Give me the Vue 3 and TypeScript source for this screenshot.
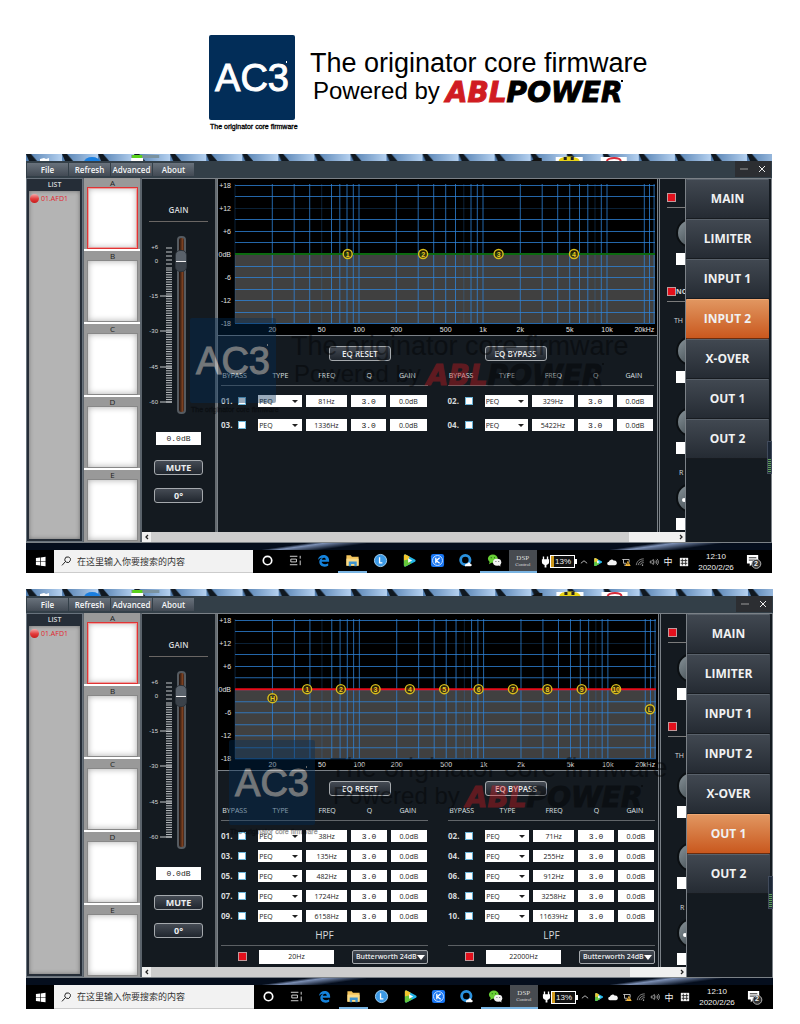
<script setup lang="ts">
import { ref } from 'vue'

interface Band { id: string; freq: number }
interface Filter { name: string; freq: string }
interface Screen {
  key: string
  active: string
  bands: Band[]
  filters: Filter[]
  curve: string
  side: string
  gain: number
}

const makeBands = (freqs: number[]): Band[] =>
  freqs.map((freq, i) => ({ id: String(i + 1).padStart(2, '0'), freq }))

const screens = ref<Screen[]>([
  {
    key: 'input',
    active: 'INPUT 2',
    bands: makeBands([81, 329, 1336, 5422]),
    filters: [],
    curve: '#0c6a10',
    side: 'NO',
    gain: 0,
  },
  {
    key: 'output',
    active: 'OUT 1',
    bands: makeBands([38, 71, 135, 255, 482, 912, 1724, 3258, 6158, 11639]),
    filters: [
      { name: 'HPF', freq: '20Hz' },
      { name: 'LPF', freq: '22000Hz' },
    ],
    curve: '#e80c18',
    side: '',
    gain: 0,
  },
])

const menus = ['File', 'Refresh', 'Advanced', 'About']
const presets = ['A', 'B', 'C', 'D', 'E']
const pages = ['MAIN', 'LIMITER', 'INPUT 1', 'INPUT 2', 'X-OVER', 'OUT 1', 'OUT 2']
const apps = ['cortana', 'taskview', 'edge', 'folder', 'clockapp', 'player', 'kapp', 'browser', 'wechat']
const tray = ['chevron', 'player', 'cloud', 'network', 'wifi', 'volume']
const openApps = ['folder', 'wechat']

const freqX = (f: number): number => Math.round((141 + 124 * Math.log10(f / 100)) * 10) / 10
const dbY = (db: number): number => Math.round(75 - db * 3.86)

const gridFreqs: number[] = []
for (const decade of [10, 100, 1000, 10000]) {
  for (let n = 1; n < 10; n++) {
    const f = decade * n
    if (f <= 20000) gridFreqs.push(f)
  }
}
gridFreqs.push(22000, 24000)
const faint = [10, 50, 700, 8000]
const gridDbs = [18, 15, 12, 9, 6, 3, 0, -3, -6, -9, -12, -15, -18]
const dbLabels = [
  { db: 18, text: '+18' }, { db: 12, text: '+12' }, { db: 6, text: '+6' }, { db: 0, text: '0dB' },
  { db: -6, text: '-6' }, { db: -12, text: '-12' }, { db: -18, text: '-18' },
]
const freqLabels = [
  { f: 20, text: '20' }, { f: 50, text: '50' }, { f: 100, text: '100' }, { f: 200, text: '200' },
  { f: 500, text: '500' }, { f: 1000, text: '1k' }, { f: 2000, text: '2k' }, { f: 5000, text: '5k' },
  { f: 10000, text: '10k' }, { f: 20000, text: '20kHz' },
]

const ticks: number[] = []
for (let y = 12; y < 34; y += 4) ticks.push(y)
for (let i = 0; i < 56; i++) ticks.push(Math.round((34 + i * 2.4) * 10) / 10)
const scaleMarks = [
  { y: 11, text: '+6' }, { y: 25, text: '0' }, { y: 60, text: '-15' },
  { y: 95, text: '-30' }, { y: 131, text: '-45' }, { y: 166, text: '-60' },
]

const half = (bands: Band[], rest: number): Band[] => bands.filter((_, i) => i % 2 === rest)
</script>

<template>
  <svg class="sprite" aria-hidden="true">
    <defs>
      <linearGradient id="knobFill" x1="0" y1="0" x2="1" y2="1">
        <stop offset="0" stop-color="#8c979d" /><stop offset="1" stop-color="#2c363c" />
      </linearGradient>
      <linearGradient id="sky" x1="0" y1="0" x2="1" y2="0">
        <stop offset="0" stop-color="#4f7cae" /><stop offset="1" stop-color="#b5d1f0" />
      </linearGradient>
      <pattern id="slats" width="36" height="7" patternUnits="userSpaceOnUse">
        <rect width="36" height="7" fill="url(#sky)" />
        <path d="M0 0h5l6 7H3z" fill="#101820" />
      </pattern>
      <symbol id="i-windows" viewBox="0 0 12 12"><path d="M1 2.3 5.5 1.6v4H1zM6.2 1.5 11.5.7v4.9H6.2zM1 6.3h4.5v4L1 9.7zM6.2 6.3h5.3v5l-5.3-.8z" fill="#fff" /></symbol>
      <symbol id="i-search" viewBox="0 0 12 12"><path d="M5.3 6.7 2 10.4M4.8 4.3a2.8 2.8 0 1 1 1.5 2.9 2.8 2.8 0 0 1-1.5-2.9z" fill="none" stroke="#222" /></symbol>
      <symbol id="i-cortana" viewBox="0 0 16 16"><circle cx="8" cy="8" r="4.500" fill="none" stroke="#fff" stroke-width="1.800" /></symbol>
      <symbol id="i-taskview" viewBox="0 0 16 16"><path d="M2 3.500h8M2 12.500h8M3 6.500h6v3H3zM13 3v3M13 8v5" fill="none" stroke="#ddd" /></symbol>
      <symbol id="i-edge" viewBox="0 0 16 16"><path d="M2 7.4C2.7 3.8 5.200 2 8.200 2 12 2 14 4.700 14 8v1.300H6c.2 3 4.700 3.200 7 1.700v2.600c-4.500 2.200-9.500.6-9.500-4.200C3.500 7.200 5 5.800 6.600 5 4.600 5.300 3 6.200 2 7.400zM6.200 7.200h4.300C10.400 4.300 6.600 4.400 6.200 7.200z" fill="#1583dc" /></symbol>
      <symbol id="i-folder" viewBox="0 0 16 16"><path d="M1.500 2.500h4.600l1.300 1.600h7.100v9.400h-13z" fill="#f3c35a" /><path d="M1.500 6h13v7.500h-13z" fill="#fbdc88" /><path d="M4 9h8.500v5H10v-2.300H6.500V14H4z" fill="#3f94d0" /></symbol>
      <symbol id="i-clockapp" viewBox="0 0 16 16"><circle cx="8" cy="8" r="6.500" fill="#3b99e6" stroke="#a8d5f7" /><path d="M7 4.500v6h3" fill="none" stroke="#fff" stroke-width="1.400" /></symbol>
      <symbol id="i-player" viewBox="0 0 16 16"><path d="M2 3c0-1.400 1.200-1.800 2.300-1.200l9.500 5c1 .6 1 1.800 0 2.400l-9.500 5C3.200 14.800 2 14.400 2 13z" fill="#25b7e8" /><path d="M2 8V3c0-1.400 1.200-1.800 2.300-1.200L8 3.700 6 12z" fill="#f4c62c" /><path d="M2 8v5c0 1.400 1.200 1.800 2.300 1.200L10 11 6 7z" fill="#66c83a" /><path d="m6.500 5.500 4.300 2.500-4.300 2.500z" fill="#fff" /></symbol>
      <symbol id="i-kapp" viewBox="0 0 16 16"><rect x="1" y="1" width="14" height="14" rx="2.500" fill="#1976f2" /><circle cx="8" cy="8" r="5.300" fill="none" stroke="#cfe4ff" /><path d="M6.200 5v6M10.300 5 6.700 8.200l3.600 2.800" fill="none" stroke="#fff" stroke-width="1.400" /></symbol>
      <symbol id="i-browser" viewBox="0 0 16 16"><circle cx="7.800" cy="7.500" r="5" fill="none" stroke="#2a91dd" stroke-width="3" /><path d="M7.500 14c-.6-2 1-3 2.300-2.500.7-2 3.400-1.700 3.500.2 1.700 0 1.900 2.300.2 2.300z" fill="#fff" /></symbol>
      <symbol id="i-wechat" viewBox="0 0 16 16"><ellipse cx="6.200" cy="6" rx="5.200" ry="4.500" fill="#67cf35" /><path d="m3 9-1 3 3.200-1.800z" fill="#67cf35" /><ellipse cx="10.800" cy="9.800" rx="4.400" ry="3.700" fill="#f2f2f2" /><path d="m12 12.500 2.300 2-.3-3z" fill="#f2f2f2" /><path d="M4 4.500h1v1H4zM7.500 4.500h1v1h-1z" fill="#174d11" /><path d="M9 8.500h1v1H9zM12 8.500h1v1h-1z" fill="#666" /></symbol>
      <symbol id="i-chevron" viewBox="0 0 16 16"><path d="m3 10 5-4 5 4" fill="none" stroke="#ddd" stroke-width="1.300" /></symbol>
      <symbol id="i-cloud" viewBox="0 0 16 16"><path d="M3 13a2.700 2.700 0 0 1 0-5.400A4.500 4.500 0 0 1 11 6a3.500 3.500 0 0 1 2 7z" fill="#f4f4f4" /></symbol>
      <symbol id="i-network" viewBox="0 0 16 16"><path d="M2 4h11v5M4 4v6h4M5 13h4" fill="none" stroke="#ddd" stroke-width="1.300" /><path d="m11 6 4.500 8.500h-9z" fill="#f7b93a" /><path d="M11 9v3" stroke="#222" stroke-width="1.300" /></symbol>
      <symbol id="i-wifi" viewBox="0 0 16 16"><path d="M2 13C3 7 7 3 14 3M5 13c.6-4 4-7 9-7M8 13c.4-2 2.500-4 6-4" fill="none" stroke="#ccc" /><path d="M11 12h2v2h-2z" fill="#ccc" /></symbol>
      <symbol id="i-volume" viewBox="0 0 16 16"><path d="M2 6.500h2L7 4v8L4 9.500H2zM9 6c1 1.200 1 2.800 0 4M11 4.500c2 2 2 5 0 7M13 3c2.700 3 2.700 7 0 10" fill="none" stroke="#ddd" /></symbol>
      <symbol id="i-ime" viewBox="0 0 12 12"><path d="M1 1h10v10H1z" fill="#f2f2f2" /><path d="M4 2v8M8 2v8M2 4.300h8M2 7.600h8" stroke="#222" /></symbol>
      <symbol id="i-plug" viewBox="0 0 10 14"><path d="M2 1h1.500v3h3V1H8v3h1v3c0 2-1.500 3-3 3.200V13H4v-2.800C2.500 10 1 9 1 7V4h1z" fill="#fff" /></symbol>
      <symbol id="i-notice" viewBox="0 0 18 16"><path d="M2 1h12v9H8l-3 3v-3H2z" fill="#fff" /><path d="M4 4h8M4 6.500h6" stroke="#222" /><circle cx="12" cy="10.500" r="4.800" fill="#333" stroke="#bbb" /></symbol>
    </defs>
  </svg>

  <main class="page">
    <header class="top">
      <div class="brand">
        <div class="mark">AC3<i class="dot"></i></div>
        <div class="words">
          <div class="line1">The originator core firmware</div>
          <div class="line2">Powered by <b class="logo"><span>ABL</span>POWER</b><i class="dot ink"></i></div>
        </div>
        <small>The originator core firmware</small>
      </div>
    </header>

    <section v-for="s in screens" :key="s.key" class="desktop" :class="s.key">
      <svg class="strip" viewBox="0 0 745 7" preserveAspectRatio="xMinYMin slice" aria-hidden="true">
        <rect width="745" height="7" fill="#27486b" />
        <path d="M0 0h745v7H0z" fill="url(#slats)" />
        <path d="M14 7V5l4-1 2 1 3-1v3z" fill="#fff" /><ellipse cx="66" cy="8" rx="8" ry="5" fill="#1a7fe0" />
        <path d="M105 2h12v5h-12z" fill="#fff" /><path d="M105 1h28v3h-28z" fill="#7a929f" /><path d="M106 1h10v3h-10z" fill="#5ad21c" />
        <path d="M504 7l6-3h5v3z" fill="#111" /><path d="M529 3h27v4h-27z" fill="#fff" /><path d="M532 7c0-6 20-6 21 0z" fill="#e8d316" /><path d="M537 3h3v3h-3zM544 3h3v3h-3z" fill="#222" />
        <path d="M574 3h26v4h-26z" fill="#fff" /><path d="M580 7c2-4 13-4 14 0" fill="none" stroke="#d72b3a" stroke-width="2" />
      </svg>

      <div class="menubar">
        <nav class="menus"><button v-for="m in menus" :key="m" type="button">{{ m }}</button></nav>
        <div class="winbtns">
          <button type="button" aria-label="Minimize"><svg viewBox="0 0 8 8"><path d="M0 4h8" stroke="#9a9a9a" /></svg></button>
          <button type="button" aria-label="Close"><svg viewBox="0 0 8 8"><path d="m1 1 6 6M7 1 1 7" stroke="#eee" /></svg></button>
        </div>
      </div>

      <div class="body">
        <aside class="list">
          <h2>LIST</h2>
          <ul><li><i class="led"></i>01.AFD1</li></ul>
        </aside>

        <div class="presets">
          <div v-for="(p, i) in presets" :key="p" class="preset">
            <span>{{ p }}</span>
            <button type="button" :class="{ on: i === 0 }" :aria-label="'Preset ' + p"></button>
          </div>
        </div>

        <div class="stage">
          <div class="work">
            <section class="gain">
              <h2>GAIN</h2>
              <div class="fader">
                <svg viewBox="0 0 26 178" aria-hidden="true">
                  <path v-for="t in ticks" :key="t" :d="`M18 ${t}h6`" stroke="#c4c8ca" />
                  <template v-for="m in scaleMarks" :key="m.text">
                    <path v-if="m.y > 30" :d="`M12 ${m.y}h12`" stroke="#c4c8ca" />
                    <text x="10" :y="m.y + 2" text-anchor="end">{{ m.text }}</text>
                  </template>
                </svg>
                <input v-model.number="s.gain" type="range" min="-60" max="5" step="0.1" aria-label="Gain">
              </div>
              <input class="readout" :value="s.gain.toFixed(1) + 'dB'" aria-label="Gain value">
              <button type="button" class="key">MUTE</button>
              <button type="button" class="key">0°</button>
            </section>

            <section class="eq">
              <svg class="chart" viewBox="0 0 439 156" role="img" aria-label="EQ response">
                <rect width="439" height="156" fill="#000" />
                <rect x="17" y="75" width="420" height="69" fill="#404040" />
                <g stroke="#2f83d8">
                  <path v-for="f in gridFreqs" :key="f" :d="`M${freqX(f)} 5V144`" :opacity="faint.includes(f) ? 0.25 : 0.78" />
                  <path v-for="d in gridDbs" :key="d" :d="`M17 ${dbY(d) + 0.5}H437`" :opacity="d === 12 ? 0.25 : 0.78" />
                </g>
                <path d="M17 75H437" :stroke="s.curve" stroke-width="2" />
                <g class="axis">
                  <text v-for="l in dbLabels" :key="l.text" x="13" :y="dbY(l.db) + 3" text-anchor="end">{{ l.text }}</text>
                  <text v-for="l in freqLabels" :key="l.text" :x="freqX(l.f)" y="153" text-anchor="middle">{{ l.text }}</text>
                </g>
                <g class="node">
                  <g v-for="(b, i) in s.bands" :key="b.id">
                    <circle :cx="freqX(b.freq)" cy="75" r="4.500" />
                    <text :x="freqX(b.freq)" y="77.500">{{ i + 1 }}</text>
                  </g>
                  <g v-if="s.filters.length">
                    <circle :cx="freqX(20)" cy="84" r="4.500" /><text :x="freqX(20)" y="86.500">H</text>
                    <circle cx="431" cy="95" r="4.500" /><text x="431" y="97.500">L</text>
                  </g>
                </g>
              </svg>

              <div class="halves">
                <div v-for="side in 2" :key="side" class="half">
                  <button type="button" class="key">{{ side === 1 ? 'EQ RESET' : 'EQ BYPASS' }}</button>
                  <table>
                    <colgroup><col class="c1"><col class="c2"><col class="c3"><col class="c4"><col class="c5"></colgroup>
                    <thead><tr><th>BYPASS</th><th>TYPE</th><th>FREQ</th><th>Q</th><th>GAIN</th></tr></thead>
                    <tbody>
                      <tr v-for="b in half(s.bands, side - 1)" :key="b.id">
                        <td><label>{{ b.id }}.<input type="checkbox" class="tick"></label></td>
                        <td><div class="pick"><select :aria-label="'Type ' + b.id"><option>PEQ</option></select></div></td>
                        <td><input :value="b.freq + 'Hz'" :aria-label="'Frequency ' + b.id"></td>
                        <td><input class="mono" value="3.0" :aria-label="'Q ' + b.id"></td>
                        <td><input value="0.0dB" :aria-label="'Gain ' + b.id"></td>
                      </tr>
                    </tbody>
                  </table>
                  <div v-if="s.filters.length" class="filter">
                    <h3>{{ s.filters[side - 1].name }}</h3>
                    <div class="frow">
                      <input type="checkbox" class="red" checked :aria-label="s.filters[side - 1].name + ' on'">
                      <input class="ffreq" :value="s.filters[side - 1].freq" :aria-label="s.filters[side - 1].name + ' frequency'">
                      <div class="slope"><select :aria-label="s.filters[side - 1].name + ' slope'"><option>Butterworth 24dB</option></select></div>
                    </div>
                  </div>
                </div>
              </div>
            </section>

            <section class="dyn">
              <div class="sw"><input type="checkbox" class="red" checked aria-label="Compressor on"></div>
              <div class="dial first"><svg viewBox="0 0 30 30"><circle cx="15" cy="15" r="14" fill="url(#knobFill)" stroke="#0b0f12" stroke-width="2" /></svg><input aria-label="Ratio"></div>
              <div class="sw second"><input type="checkbox" class="red" checked aria-label="Noise gate on"><b>{{ s.side }}</b></div>
              <p class="th">TH</p>
              <div class="dial"><svg viewBox="0 0 30 30"><circle cx="15" cy="15" r="14" fill="url(#knobFill)" stroke="#0b0f12" stroke-width="2" /></svg><input aria-label="Threshold"></div>
              <div class="dial third"><svg viewBox="0 0 30 30"><circle cx="15" cy="15" r="14" fill="url(#knobFill)" stroke="#0b0f12" stroke-width="2" /></svg><input aria-label="Attack"></div>
              <p class="rel">R</p>
              <div class="dial"><svg viewBox="0 0 30 30"><circle cx="15" cy="15" r="14" fill="url(#knobFill)" stroke="#0b0f12" stroke-width="2" /><circle cx="8" cy="17" r="2" fill="#fff" /></svg><input aria-label="Release"></div>
            </section>
          </div>
          <div class="scroll">
            <button type="button" aria-label="Scroll left"><svg viewBox="0 0 8 8"><path d="M5 2 3 4l2 2" fill="none" stroke="#222" stroke-width="1.300" /></svg></button>
            <div class="rail"><div class="grip"></div></div>
            <button type="button" aria-label="Scroll right"><svg viewBox="0 0 8 8"><path d="m3 2 2 2-2 2" fill="none" stroke="#222" stroke-width="1.300" /></svg></button>
          </div>
        </div>

        <nav class="pages">
          <button v-for="p in pages" :key="p" type="button" :class="{ on: p === s.active }">{{ p }}</button>
          <i class="meter"></i>
        </nav>
      </div>

      <div class="dusk"></div>

      <footer class="taskbar">
        <button type="button" class="start" aria-label="Start"><svg><use href="#i-windows" /></svg></button>
        <label class="find"><svg><use href="#i-search" /></svg><input placeholder="在这里输入你要搜索的内容" aria-label="搜索"></label>
        <div class="apps">
          <button v-for="a in apps" :key="a" type="button" :aria-label="a" :class="{ open: openApps.includes(a) }"><svg><use :href="'#i-' + a" /></svg></button>
          <button type="button" class="dsp open">DSP<small>Control</small></button>
        </div>
        <div class="power"><svg><use href="#i-plug" /></svg><span>13%</span></div>
        <div class="tray"><svg v-for="t in tray" :key="t"><use :href="'#i-' + t" /></svg><span>中</span></div>
        <div class="ime"><svg><use href="#i-ime" /></svg></div>
        <div class="clock"><time>12:10</time><time>2020/2/26</time></div>
        <button type="button" class="notice" aria-label="Notifications"><svg><use href="#i-notice" /></svg><b>2</b></button>
      </footer>

      <div class="brand watermark" aria-hidden="true">
        <div class="mark">AC3<i class="dot"></i></div>
        <div class="words">
          <div class="line1">The originator core firmware</div>
          <div class="line2">Powered by <b class="logo"><span>ABL</span>POWER</b><i class="dot ink"></i></div>
        </div>
        <small>The originator core firmware</small>
      </div>
    </section>
  </main>
</template>

<style>
body { margin: 0; background: #fff; }
</style>

<style scoped>
* { box-sizing: border-box; }
button, input, select { font: inherit; color: inherit; margin: 0; padding: 0; border: 0; border-radius: 0; background: none; min-width: 0; }
input, select { appearance: none; outline: 0; }
h2, h3, p, ul { margin: 0; padding: 0; font-weight: 400; }
ul { list-style: none; }
svg { display: block; }
.sprite { position: absolute; width: 0; height: 0; }
.page { font-family: "Open Sans", "Noto Sans CJK SC", sans-serif; font-size: 8px; color: #d5d8da; padding: 0 28px 15px 26px; }
.top { height: 154px; padding: 35px 0 0 183px; }

/* brand lockup */
.brand { display: grid; grid-template-columns: 86px max-content; column-gap: 15px; width: max-content; font-family: "Liberation Sans", Arial, sans-serif; color: #000; }
.mark { position: relative; height: 85px; border-radius: 2px; background: #022d58; color: #fff; font-size: 38px; line-height: 86px; text-align: center; -webkit-text-stroke: 1px #fff; }
.dot { position: absolute; top: 26px; right: 8px; width: 1px; height: 2px; background: #fff; }
.dot.ink { top: 2px; right: 0; background: #000; width: 2px; }
.words { padding-top: 13px; }
.line1 { font-size: 27px; line-height: 30px; }
.line2 { position: relative; display: flex; align-items: baseline; gap: 6px; width: max-content; padding-left: 3px; font-size: 24px; line-height: 24px; }
.logo { font-family: "DejaVu Sans", sans-serif; font-style: italic; font-size: 28px; line-height: 24px; -webkit-text-stroke: 1px currentColor; position: relative; top: 3px; }
.logo span { color: #d01c22; }
.brand small { padding: 2px 0 0 1px; font-size: 7px; line-height: 10px; white-space: nowrap; width: 0; -webkit-text-stroke: 0.3px #000; }
.watermark { position: absolute; opacity: 0.4; pointer-events: none; }
.input .watermark { left: 164px; top: 164px; }
.output .watermark { left: 203px; top: 151px; }

/* desktop */
.desktop { position: relative; background: #050d18; }
.desktop + .desktop { margin: 16px -1px 0 0; }
.strip { width: 100%; height: 7px; }
.menubar { display: flex; justify-content: space-between; height: 17px; background: #333f48; }
.menus { display: flex; gap: 1px; padding: 2px 0 2px 1px; }
.menus button { width: 41px; height: 13px; background: linear-gradient(#69727c, #424a54); font-weight: 600; font-size: 8px; line-height: 13px; color: #f6f7f8; }
.winbtns { display: flex; background: #2c2e32; margin: 0 1px 1px 0; }
.winbtns button { width: 18px; display: grid; place-items: center; }
.winbtns svg { width: 8px; height: 8px; }

.body { display: grid; grid-template-columns: 57px 59px minmax(0, 1fr) 86px; background: #141a20; border-right: 1px solid #7b8187; border-bottom: 1px solid #7b8187; }
.list { display: flex; flex-direction: column; background: #252d37; border: 1px solid #68727c; padding: 0 2px 2px; }
.list h2 { font-weight: 600; font-size: 7px; line-height: 12px; text-align: center; }
.list ul { flex: 1; background: #b4b4b4; box-shadow: inset 0 0 4px #6d6d6d; padding-top: 3px; }
.list li { display: flex; align-items: center; gap: 2px; padding-left: 1px; font-size: 7px; line-height: 9px; color: #e0262c; white-space: nowrap; }
.led { width: 9px; height: 9px; border-radius: 50%; background: linear-gradient(#f3a9a9, #e23a3a 55%, #c81c1c); }
.presets { background: #999; border-left: 1px solid #5b636b; border-right: 2px solid #5b636b; }
.preset { display: flex; flex-direction: column; height: 73px; padding: 0 2px 0 3px; border-bottom: 2px solid #fff; }
.preset:last-child { height: 72px; border-bottom: 0; }
.preset span { font-size: 8px; line-height: 9px; text-align: center; color: #222; }
.preset button { height: 62px; background: #fff; border: 1px solid #888; box-shadow: inset 0 0 6px #aaa; }
.preset button.on { border-color: #e03434; box-shadow: inset 0 0 0 1px #eda0a0, inset 0 0 6px #aaa; }

.stage { display: flex; flex-direction: column; min-width: 0; border-top: 1px solid #7b8187; }
.work { flex: 1; display: grid; grid-template-columns: 75px minmax(0, 1fr) 27px; }
.key { height: 15px; padding: 0 6px; border: 1px solid #a5a9ad; border-radius: 3px; background: linear-gradient(#454b54, #20262e); font-weight: 600; font-size: 8px; line-height: 12px; color: #eceef0; }

.gain { display: flex; flex-direction: column; align-items: center; border-right: 2px solid #656b70; }
.gain h2 { width: 59px; padding: 25px 0 5px; border-bottom: 1px solid #6a6664; font-weight: 600; font-size: 8px; line-height: 12px; text-align: center; }
.fader { display: flex; gap: 1px; margin: 14px 0 18px; width: 62px; }
.fader svg { width: 26px; height: 178px; flex: none; }
.fader text { font: 6px "Liberation Sans", sans-serif; fill: #d5d8da; }
.fader input { writing-mode: vertical-lr; direction: rtl; width: 14px; height: 178px; flex: none; }
.fader input::-webkit-slider-runnable-track { width: 9px; height: 100%; margin: 0 auto; border: 2px solid #555b61; border-radius: 4px; background: linear-gradient(90deg, #1b1210, #7b4020 70%, #3a2218); }
.fader input::-webkit-slider-thumb { appearance: none; width: 12px; height: 22px; margin-left: -4px; border: 1px solid #2c333a; border-radius: 5px; background: linear-gradient(#5a626b 0 10px, #eee 10px 11px, #3b424a 11px); }
.readout { width: 45px; height: 13px; margin-bottom: 15px; background: #fff; color: #222; text-align: center; font: 8px "Liberation Mono", monospace; }
.gain .key { width: 49px; margin-bottom: 13px; font-weight: 700; font-size: 9px; }

.eq { border-left: 1px solid #7b8187; border-right: 1px solid #7b8187; }
.chart { width: 100%; }
.axis text { font: 7px "Liberation Sans", sans-serif; fill: #e2e2e2; }
.node circle { fill: #302a08; fill-opacity: 0.7; stroke: #d8bd1c; stroke-width: 1.4px; }
.node text { font: 700 7px "Liberation Sans", sans-serif; fill: #e8cb20; text-anchor: middle; }
.halves { display: grid; grid-template-columns: 1fr 1fr; column-gap: 20px; border-top: 1px solid #7b8187; padding: 10px 3px 0; }
.half { display: flex; flex-direction: column; align-items: stretch; }
.half > .key { width: 62px; align-self: flex-start; }
.half:first-child > .key { margin-left: 108px; }
.half:last-child > .key { margin-left: 37px; }
.half table { width: 100%; margin-top: 5px; table-layout: fixed; border-collapse: collapse; background: linear-gradient(#62666a, #62666a) 0 19px / 100% 1px no-repeat; }
.c1 { width: 18%; } .c2 { width: 23%; } .c3 { width: 22%; } .c4 { width: 19%; } .c5 { width: 18%; }
.half th { height: 23px; padding: 0 3px 5px 0; font-weight: 400; font-size: 7px; color: #dde0e2; vertical-align: middle; }
.half th:first-child { padding-right: 10px; }
.half td { height: 24px; padding: 0 4px 0 0; }
.half td:last-child { padding-right: 1px; }
.output .half th { height: 25px; padding-bottom: 7px; }
.output .half td { height: 20px; }
.half td label { display: flex; align-items: center; justify-content: space-between; padding-right: 8px; font-weight: 700; font-size: 8px; line-height: 12px; }
.tick { width: 8px; height: 8px; background: #fff; border: 1px solid #6bb4d8; }
.half td input:not(.tick), .pick select, .ffreq { display: block; width: 100%; height: 12px; background: #fff; color: #222; text-align: center; font: 7px "Open Sans", sans-serif; }
.half td input.mono { font: 8px "Liberation Mono", monospace; }
.half td .pick select { text-align: left; padding-left: 1px; }
.pick, .slope { position: relative; }
.pick::after { content: ""; position: absolute; right: 4px; top: 5px; border: 3px solid transparent; border-top-color: #222; border-bottom: 0; }
.red { width: 9px; height: 9px; background: #e3101c; border: 1px solid #c09a9c; flex: none; }
.filter h3 { height: 20px; border-bottom: 1px solid #5c6064; font-size: 10px; line-height: 18px; text-align: center; }
.frow { display: flex; align-items: center; gap: 12px; height: 21px; padding: 0 0 0 17px; }
.frow .ffreq { flex: 1; height: 14px; }
.slope { width: 76px; flex: none; margin-left: 6px; }
.slope select { display: block; width: 100%; height: 14px; padding-left: 3px; border: 1px solid #a5a9ad; border-radius: 2px; background: linear-gradient(#454b54, #20262e); color: #eceef0; font: 600 7px "Open Sans", sans-serif; }
.slope::after { content: ""; position: absolute; right: 3px; top: 5px; border: 4px solid transparent; border-top: 5px solid #fff; border-bottom: 0; }

.dyn { overflow: hidden; border-left: 1px solid #7b8187; padding-left: 7px; margin-left: 1px; }
.sw { width: 60px; display: flex; padding: 14px 0 5px; border-bottom: 1px solid #7b7b7b; font-size: 7px; line-height: 9px; }
.sw.second { padding-top: 22px; }
.dial { width: 60px; padding-left: 9px; margin-top: 10px; }
.dial svg { width: 30px; height: 30px; }
.dial input { display: block; width: 32px; height: 12px; margin: 5px 0 0 0; background: #fff; }
.dial.third { margin-top: 24px; }
.th { font-size: 7px; line-height: 10px; margin-top: 14px; padding-left: 7px; }
.rel { font-size: 7px; line-height: 10px; margin-top: 14px; padding-left: 12px; }
.rel + .dial { margin-top: 5px; }

.scroll { display: flex; height: 10px; background: #f0f0f0; }
.scroll button { width: 9px; display: grid; place-items: center; }
.scroll svg { width: 8px; height: 8px; }
.rail { flex: 1; }
.grip { width: 91%; height: 10px; background: #cdcdcd; }

.pages { position: relative; display: flex; flex-direction: column; border-top: 1px solid #7b8187; border-left: 1px solid #7b8187; padding-right: 2px; }
.pages button { height: 40px; border-top: 1px solid #59616a; border-bottom: 1px solid #171b20; border-radius: 1px; background: linear-gradient(#414851, #252b33); font-weight: 700; font-size: 12px; line-height: 36px; color: #f0f1f2; }
.pages button.on { background: linear-gradient(#e19660, #c9581e); border-color: #f0a873 #171b20 #6a2c0e; }
.meter { position: absolute; right: -1px; top: 262px; width: 5px; height: 33px; border: 1px solid #414b5c; background: repeating-linear-gradient(#5ea058 0 1px, #1c2736 1px 2px) 0 17px / 3px 13px no-repeat #1c2736; }

.dusk { height: 7px; background: linear-gradient(172deg, transparent 40%, #7c8fb4 50%, transparent 75%) 210px 0 / 130px 7px no-repeat, linear-gradient(172deg, transparent 40%, #7c8fb4 50%, transparent 75%) 550px 0 / 150px 7px no-repeat, #050e1d; }
.taskbar { display: flex; height: 23px; background: #000; color: #f0f0f0; overflow: hidden; }
.output .taskbar { height: 24px; }
.start { width: 28px; display: grid; place-items: center; }
.start svg { width: 11px; height: 11px; }
.find { flex: 1; min-width: 0; display: flex; align-items: center; gap: 5px; padding-left: 6px; background: #f2f2f2; border-bottom: 1px solid #ccc; }
.find svg { width: 12px; height: 12px; flex: none; }
.find input { flex: 1; height: 20px; font: 9px "Noto Sans CJK SC", sans-serif; }
.find input::placeholder { color: #333; opacity: 1; }
.apps { flex: 0 0 284px; display: grid; grid-template-columns: repeat(10, 1fr); }
.apps button { display: grid; place-items: center; border-bottom: 2px solid transparent; }
.apps button.open { border-bottom-color: #79b4e2; background-clip: padding-box; }
.apps svg { width: 15px; height: 15px; }
.apps .dsp { align-content: center; background: #474b50; font: 7px/7px "Liberation Serif", serif; color: #ddd; }
.dsp small { font-size: 5px; line-height: 5px; }
.power { flex: 0 0 40px; display: flex; align-items: center; padding-left: 4px; }
.power svg { width: 9px; height: 14px; }
.power span { width: 25px; height: 13px; border: 1px solid #fff; background: linear-gradient(90deg, #d09a1c 3px, #111 3px); font: 8px/11px "Liberation Sans", sans-serif; text-align: right; padding-right: 3px; }
.power::after { content: ""; width: 2px; height: 5px; background: #fff; }
.tray { flex: 0 0 98px; display: grid; grid-template-columns: repeat(7, 1fr); align-items: center; justify-items: center; }
.tray svg { width: 10px; height: 10px; }
.tray span { font-size: 9px; }
.ime { flex: 0 0 18px; display: grid; place-items: center; }
.ime svg { width: 10px; height: 10px; }
.clock { flex: 0 0 46px; display: flex; flex-direction: column; justify-content: center; text-align: center; font: 8px/11px "Liberation Sans", sans-serif; }
.notice { position: relative; flex: 0 0 33px; display: flex; align-items: center; padding-left: 6px; }
.notice svg { width: 17px; height: 15px; }
.notice b { position: absolute; left: 15px; top: 10px; font: 700 7px/8px "Liberation Sans", sans-serif; }
</style>
